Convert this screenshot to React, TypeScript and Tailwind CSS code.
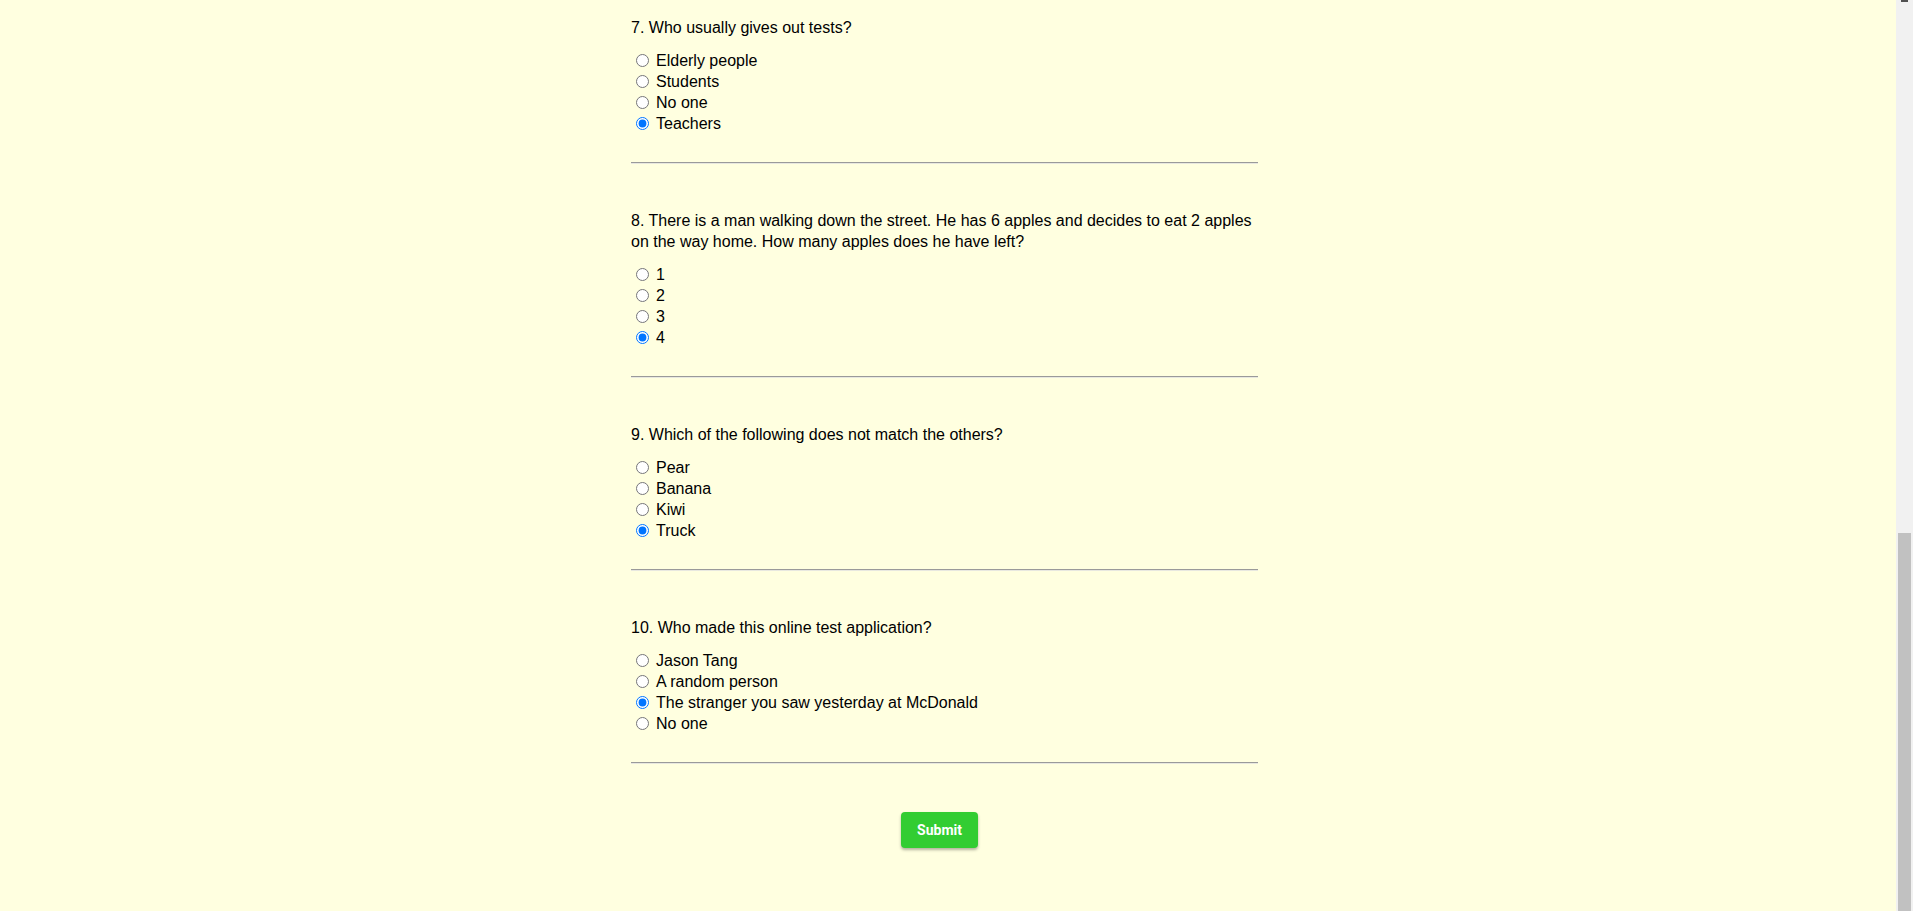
import { useState } from 'react';

type Question = {
  id: number;
  text: string;
  options: string[];
  answer: string;
};

const questions: Question[] = [
  {
    id: 7,
    text: 'Who usually gives out tests?',
    options: ['Elderly people', 'Students', 'No one', 'Teachers'],
    answer: 'Teachers',
  },
  {
    id: 8,
    text: 'There is a man walking down the street. He has 6 apples and decides to eat 2 apples on the way home. How many apples does he have left?',
    options: ['1', '2', '3', '4'],
    answer: '4',
  },
  {
    id: 9,
    text: 'Which of the following does not match the others?',
    options: ['Pear', 'Banana', 'Kiwi', 'Truck'],
    answer: 'Truck',
  },
  {
    id: 10,
    text: 'Who made this online test application?',
    options: ['Jason Tang', 'A random person', 'The stranger you saw yesterday at McDonald', 'No one'],
    answer: 'The stranger you saw yesterday at McDonald',
  },
];

function QuestionBlock({ q, value, onChange }: { q: Question; value: string; onChange: (v: string) => void }) {
  return (
    <div className="flex flex-col">
      <p className="leading-[21px]">{`${q.id}. ${q.text}`}</p>
      <div className="mt-[12px] flex flex-col">
        {q.options.map((opt) => (
          <label key={opt} className="flex h-[21px] items-center">
            <input
              type="radio"
              name={`q${q.id}`}
              checked={value === opt}
              onChange={() => onChange(opt)}
              className="ml-[5px] mr-[7px] mb-[1px] h-[13px] w-[13px]"
            />
            <span className="leading-[21px]">{opt}</span>
          </label>
        ))}
      </div>
      {/* separador */}
      <div className="mt-[28px] border-t border-b border-t-[#9a9a9a] border-b-[#e8e8e0]" />
    </div>
  );
}

export default function App() {
  const [answers, setAnswers] = useState<Record<number, string>>(
    Object.fromEntries(questions.map((q) => [q.id, q.answer]))
  );

  return (
    <div className="flex h-[911px] w-full overflow-hidden">
      <main
        className="flex-1 bg-[#ffffe0] text-[16px] text-black"
        style={{ fontFamily: '"Liberation Sans", Arial, sans-serif' }}
      >
        <div className="ml-[631px] flex w-[627px] flex-col gap-[46px] pt-[17px]">
          {questions.map((q) => (
            <QuestionBlock
              key={q.id}
              q={q}
              value={answers[q.id]}
              onChange={(v) => setAnswers({ ...answers, [q.id]: v })}
            />
          ))}
          <div className="mt-[2px] flex justify-center pr-[10px]">
            <button
              className="h-[36px] w-[77px] rounded-[4px] bg-[#32cd32] text-[14px] font-bold text-white shadow-[0_2px_3px_rgba(0,0,0,0.3)]"
              style={{ fontFamily: 'Roboto, "Liberation Sans", sans-serif' }}
            >
              Submit
            </button>
          </div>
        </div>
      </main>

      {/* Barra de rolagem */}
      <div className="flex w-[17px] flex-col justify-between bg-[#f1f1f1]">
        <div className="ml-[5px] h-[2px] w-[7px] bg-[#505050]" />
        <div className="ml-[2px] h-[378px] w-[13px] bg-[#c1c1c1]" />
      </div>
    </div>
  );
}
